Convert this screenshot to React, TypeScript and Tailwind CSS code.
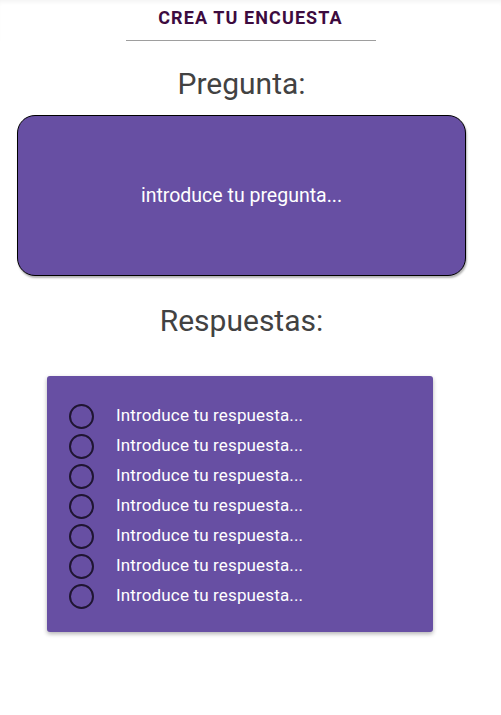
import React from "react";

const answers = Array.from({ length: 7 }, (_, i) => i);

export default function App() {
  return (
    <div className="min-h-[715px] bg-white text-[#424242]" style={{ fontFamily: "Roboto, 'Liberation Sans', sans-serif" }}>
      <header className="flex flex-col items-center pt-[6px] shadow-[inset_0_4px_4px_-2px_rgba(0,0,0,0.05)]">
        <h1 className="text-[18px] leading-6 font-bold tracking-[1.1px] text-[#3d0b3f]">CREA TU ENCUESTA</h1>
        <div className="mt-[10px] h-px w-[250px] bg-[#9e9e9e]" />
      </header>

      <section className="mr-[18px] flex flex-col items-center">
        <h2 className="mt-[25px] text-[30px] leading-9">Pregunta:</h2>
        <div className="mt-[13px] mx-[17px] self-stretch h-[161px] flex items-center justify-center rounded-[18px] border border-black bg-[#674fa3] shadow-[1px_2px_2px_rgba(0,0,0,0.3)]">
          <span className="text-[19.5px] text-white">introduce tu pregunta...</span>
        </div>

        <h2 className="mt-[27px] text-[30px] leading-9">Respuestas:</h2>

        <div className="mt-[37px] ml-[47px] mr-[50px] self-stretch rounded-[3px] bg-[#674fa3] pt-[25px] pb-[21px] pl-[22px] shadow-[0_2px_4px_rgba(0,0,0,0.3)]">
          <ul>
            {answers.map(i => (
              <li key={i} className="flex h-[30px] items-center">
                <span className="h-[25px] w-[25px] rounded-full border-[2.5px] border-[#1f1532]" />
                <span className="ml-[22px] text-[17px] tracking-[0.15px] text-white">Introduce tu respuesta...</span>
              </li>
            ))}
          </ul>
        </div>
      </section>
    </div>
  );
}
